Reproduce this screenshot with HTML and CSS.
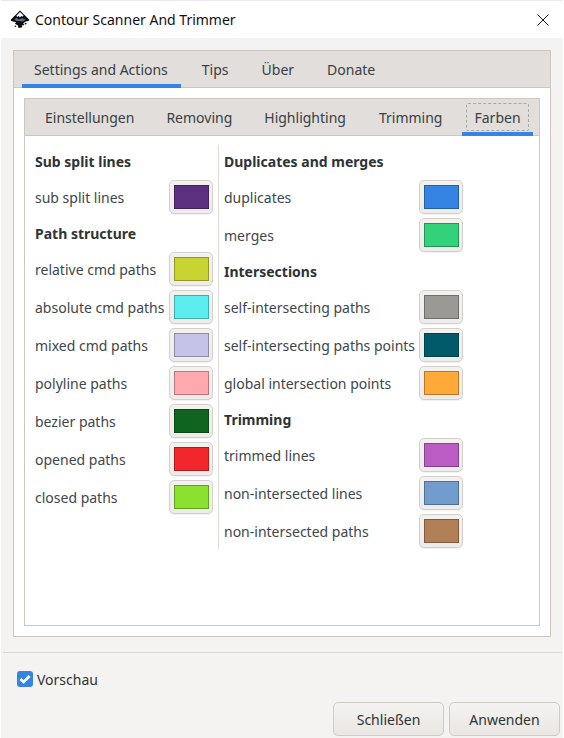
FILE: index.html
```html
<!DOCTYPE html>
<html lang="de">
<head>
<meta charset="utf-8">
<title>Contour Scanner And Trimmer</title>
<link rel="stylesheet" href="styles.css">
</head>
<body>
<div class="window">
  <header class="titlebar">
    <svg class="logo" viewBox="0 0 20 20" aria-hidden="true">
      <path d="M10 .5 L18.9 9.2 C19.6 10 19.2 10.9 18.2 11 L15.6 11.4 L13.6 13 C13.2 13.5 13.5 13.9 14 14.2 C14.6 14.7 14 15.3 13.1 15.2 L12.2 15.2 C11.7 15.3 11.7 15.8 12.1 16.2 C12.6 16.9 11.6 17.7 10 17.8 C8.4 17.8 7.7 17 8.1 16.4 C8.5 15.7 8 15.2 7.1 14.9 L5.4 14.1 C4.7 13.7 5 13.1 5.8 12.8 L6.2 12.3 L2.2 11.2 C.8 10.9 .5 10 1.2 9.2 Z" fill="#0d0d0d"/>
      <path d="M10 2 L13.6 5.6 L12.5 6.8 L11.3 6 L10 7.6 L8.7 6 L7.3 7 L6.3 5.7 Z" fill="#f2f2f2"/>
      <path d="M4.2 9.6 L6.6 7.8 L8.6 9.6 L12.4 8.2 L15.8 9.8 L12.6 11.6 L9 11 L6.6 11 Z" fill="#5d6f8e"/>
      <circle cx="15.6" cy="13.6" r=".9" fill="#0d0d0d"/>
      <circle cx="5.4" cy="16.2" r=".8" fill="#0d0d0d"/>
    </svg>
    <span class="title">Contour Scanner And Trimmer</span>
    <svg class="close" viewBox="0 0 12 12" aria-hidden="true"><path d="M.5 .5 L11.5 11.5 M11.5 .5 L.5 11.5" stroke="#111" stroke-width="1" fill="none"/></svg>
  </header>

  <main class="content">
    <section class="notebook outer">
      <nav class="tabs outer-tabs">
        <span class="tab active">Settings and Actions</span>
        <span class="tab">Tips</span>
        <span class="tab">Über</span>
        <span class="tab">Donate</span>
      </nav>
      <div class="page">
        <section class="notebook inner">
          <nav class="tabs inner-tabs">
            <span class="tab">Einstellungen</span>
            <span class="tab">Removing</span>
            <span class="tab">Highlighting</span>
            <span class="tab">Trimming</span>
            <span class="tab active focused"><span class="focus">Farben</span></span>
          </nav>
          <div class="colors">
            <div class="col left">
              <h3>Sub split lines</h3>
              <div class="row"><span>sub split lines</span><button class="swatch"><i class="c-purple"></i></button></div>
              <h3>Path structure</h3>
              <div class="row"><span>relative cmd paths</span><button class="swatch"><i class="c-lime"></i></button></div>
              <div class="row"><span>absolute cmd paths</span><button class="swatch"><i class="c-cyan"></i></button></div>
              <div class="row"><span>mixed cmd paths</span><button class="swatch"><i class="c-lavender"></i></button></div>
              <div class="row"><span>polyline paths</span><button class="swatch"><i class="c-pink"></i></button></div>
              <div class="row"><span>bezier paths</span><button class="swatch"><i class="c-forest"></i></button></div>
              <div class="row"><span>opened paths</span><button class="swatch"><i class="c-red"></i></button></div>
              <div class="row"><span>closed paths</span><button class="swatch"><i class="c-green"></i></button></div>
            </div>
            <div class="col right">
              <h3>Duplicates and merges</h3>
              <div class="row"><span>duplicates</span><button class="swatch"><i class="c-blue"></i></button></div>
              <div class="row"><span>merges</span><button class="swatch"><i class="c-mint"></i></button></div>
              <h3>Intersections</h3>
              <div class="row"><span>self-intersecting paths</span><button class="swatch"><i class="c-gray"></i></button></div>
              <div class="row"><span>self-intersecting paths points</span><button class="swatch"><i class="c-teal"></i></button></div>
              <div class="row"><span>global intersection points</span><button class="swatch"><i class="c-orange"></i></button></div>
              <h3>Trimming</h3>
              <div class="row"><span>trimmed lines</span><button class="swatch"><i class="c-magenta"></i></button></div>
              <div class="row"><span>non-intersected lines</span><button class="swatch"><i class="c-steel"></i></button></div>
              <div class="row"><span>non-intersected paths</span><button class="swatch"><i class="c-brown"></i></button></div>
            </div>
          </div>
        </section>
      </div>
    </section>
  </main>

  <div class="sep"></div>

  <label class="preview">
    <svg class="check" viewBox="0 0 16 16" aria-hidden="true">
      <rect width="16" height="16" rx="3" fill="#3584e4"/>
      <path d="M3.4 8 L6.6 11 L12.6 5" stroke="#fff" stroke-width="2.6" fill="none"/>
    </svg>
    <span>Vorschau</span>
  </label>

  <footer class="actions">
    <button class="btn">Schließen</button>
    <button class="btn">Anwenden</button>
  </footer>
</div>
</body>
</html>
```
FILE: styles.css
```css
* { box-sizing: border-box; }
html, body { margin: 0; height: 100%; background: #fff; }
body { font-family: "Noto Sans", "Open Sans", sans-serif; font-size: 14px; color: #2e3436; overflow: hidden; }

.window { width: 562px; height: 738px; margin-left: 1px; padding-top: 1px; background: #f5f3f1; display: flex; flex-direction: column; box-shadow: inset 0 1px 0 #e8e8ee; }

.titlebar { height: 37px; flex: none; background: #fff; display: flex; align-items: center; padding: 0 14px 0 9px; }
.logo { width: 20px; height: 20px; flex: none; }
.title { margin-left: 5px; font-size: 14px; color: #111; }
.close { width: 12px; height: 12px; margin-left: auto; }

.content { padding: 12px 12px 0 12px; flex: none; }
.notebook { border: 1px solid #cdc7c2; background: #fff; }
.outer { height: 587px; display: flex; flex-direction: column; }
.tabs { display: flex; background: #e1dedb; border-bottom: 1px solid #cdc7c2; height: 37px; flex: none; }
.outer-tabs { padding-left: 8px; gap: 9px; }
.inner-tabs { padding-left: 8px; gap: 8px; }
.tab { position: relative; display: flex; align-items: center; padding: 0 12px; height: 36px; white-space: nowrap; color: #3a4043; }
.outer-tabs .tab:first-child { padding-right: 13px; }
.inner-tabs .tab:nth-child(4) { margin-left: 1px; }
.tab.active::after { content: ""; position: absolute; left: 0; right: 0; bottom: -1px; height: 4px; background: #3584e4; }
.focused { padding: 4px; }
.focus { display: flex; align-items: center; height: 28px; padding: 0 7px; border: 1px dashed #a9a9a9; border-radius: 2px; }

.page { padding: 10px; flex: 1; display: flex; }
.inner { flex: 1; display: flex; flex-direction: column; }

.colors { display: flex; padding: 9px 10px; }
.col { display: flex; flex-direction: column; }
.left { width: 184px; padding-right: 5px; height: 404px; border-right: 1px solid #dedbd7; }
.right { width: 244px; padding-left: 5px; }
h3 { margin: 3px 0 1px; height: 34px; padding-bottom: 2px; display: flex; align-items: center; font-size: 14px; font-weight: 700; color: #2e3436; }
.col h3:first-child { margin-top: 0; }
.row { height: 34px; display: flex; align-items: center; justify-content: space-between; white-space: nowrap; color: #40464a; }
.row + .row { margin-top: 4px; }
.row span { padding-top: 1px; }

.swatch { width: 44px; height: 34px; padding: 0; border: 1px solid #d3cfca; border-radius: 5px; background: linear-gradient(#f4f2f0, #eeecea); display: flex; align-items: center; justify-content: center; box-shadow: 0 1px 1px rgba(0,0,0,.06); }
.swatch i { display: block; width: 35px; height: 24px; border: 1px solid rgba(0,0,0,.28); }
.c-purple { background: #5e3080; }
.c-lime { background: #c9d433; }
.c-cyan { background: #5ceeee; }
.c-lavender { background: #c5c3e8; }
.c-pink { background: #ffa8ae; }
.c-forest { background: #0f651f; }
.c-red { background: #f2272b; }
.c-green { background: #8ae22e; }
.c-blue { background: #3584e4; }
.c-mint { background: #33d17a; }
.c-gray { background: #9a9996; }
.c-teal { background: #005a6a; }
.c-orange { background: #ffa939; }
.c-magenta { background: #bb5cc5; }
.c-steel { background: #709cce; }
.c-brown { background: #b18057; }

.sep { height: 1px; margin: 15px 1px 0 2px; background: #dedbd7; flex: none; }
.preview { display: flex; align-items: center; gap: 4px; margin: 18px 0 0 16px; height: 16px; color: #2e3436; }
.check { width: 16px; height: 16px; }

.actions { display: flex; justify-content: flex-end; gap: 5px; margin-top: 15px; padding-right: 3px; }
.btn { width: 111px; height: 34px; border: 1px solid #cfcac4; border-radius: 5px; background: linear-gradient(#f5f3f1, #e9e6e3); font: inherit; color: #2e3436; padding: 0; }
```
